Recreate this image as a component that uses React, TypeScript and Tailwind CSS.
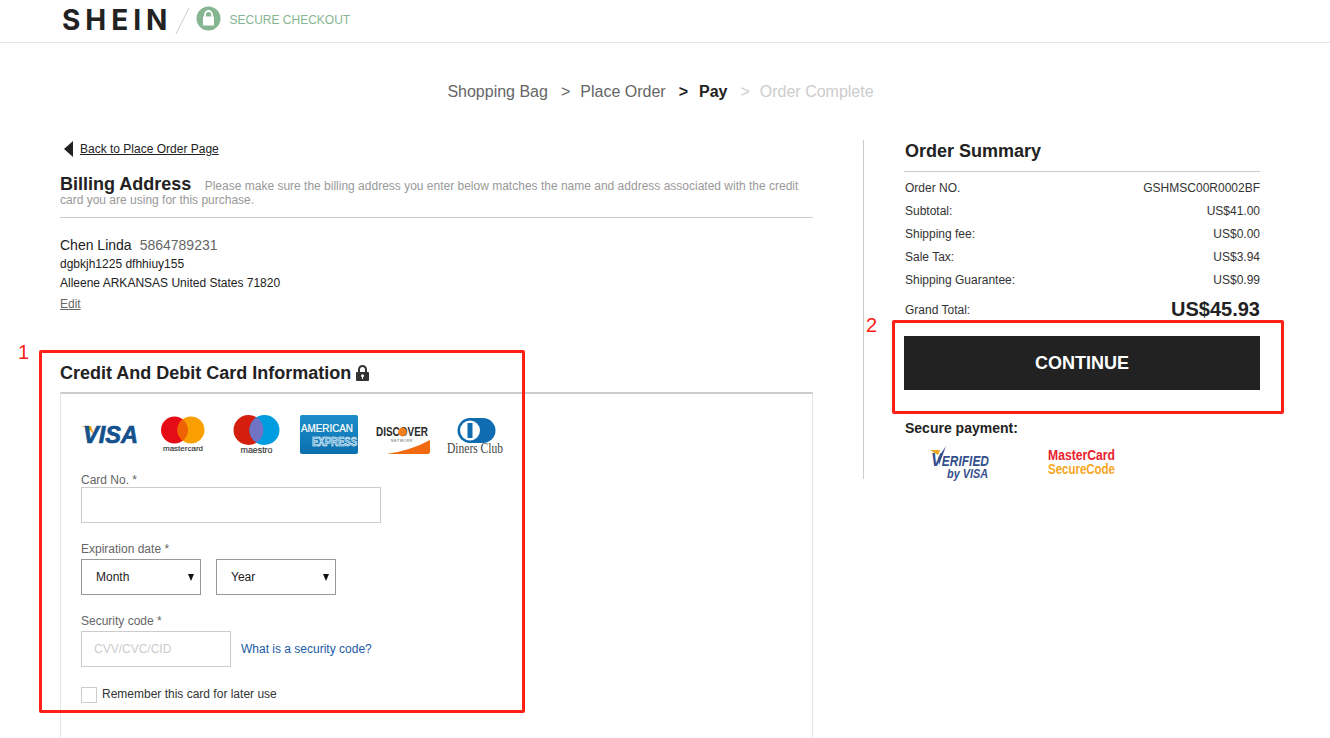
import React from "react";

const Visa = () => (
  <svg className="overflow-visible" width="60" height="40" viewBox="0 0 60 40">
    <path d="M0 11 L10 11 L13 20 Q9 13.5 0 11Z" fill="#f0a51e" />
    <text x="2" y="28" fontFamily="'Liberation Sans',sans-serif" fontWeight="700" fontStyle="italic" fontSize="24" fill="#14508c" stroke="#14508c" strokeWidth="0.7" textLength="55" lengthAdjust="spacingAndGlyphs">VISA</text>
  </svg>
);
const Mastercard = () => (
  <svg className="overflow-visible" width="44" height="40" viewBox="0 0 44 40">
    <circle cx="13.5" cy="15" r="13.5" fill="#e60c17" />
    <circle cx="30" cy="15" r="13.5" fill="#f9a000" />
    <path d="M21.75 4.3a13.5 13.5 0 0 1 0 21.4a13.5 13.5 0 0 1 0-21.4z" fill="#ee6203" />
    <text x="22" y="36" textAnchor="middle" fontFamily="'Liberation Sans',sans-serif" fontSize="8" fill="#333" stroke="#333" strokeWidth="0.15" textLength="40" lengthAdjust="spacingAndGlyphs">mastercard</text>
  </svg>
);
const Maestro = () => (
  <svg className="overflow-visible" width="48" height="40" viewBox="0 0 48 40">
    <circle cx="15.5" cy="15" r="15" fill="#d41f0e" />
    <circle cx="31.5" cy="15" r="15" fill="#009ce0" />
    <path d="M23.5 2.3a15 15 0 0 1 0 25.4a15 15 0 0 1 0-25.4z" fill="#7174c4" />
    <text x="23.5" y="38" textAnchor="middle" fontFamily="'Liberation Sans',sans-serif" fontSize="8.5" fill="#333" stroke="#333" strokeWidth="0.15" textLength="32" lengthAdjust="spacingAndGlyphs">maestro</text>
  </svg>
);
const Amex = () => (
  <svg className="overflow-visible" width="58" height="40" viewBox="0 0 58 40">
    <defs>
      <linearGradient id="ax" x1="0" y1="0" x2="0" y2="1">
        <stop offset="0" stopColor="#1d8fcb" />
        <stop offset="1" stopColor="#0b6fae" />
      </linearGradient>
    </defs>
    <rect width="58" height="39" rx="2" fill="url(#ax)" />
    <text x="1" y="17" fontFamily="'Liberation Sans',sans-serif" fontSize="10.5" fill="#fff" stroke="#fff" strokeWidth="0.2" textLength="52" lengthAdjust="spacingAndGlyphs">AMERICAN</text>
    <text x="12" y="31" fontFamily="'Liberation Sans',sans-serif" fontWeight="700" fontSize="12" fill="#4a9fd0" stroke="#fff" strokeWidth="0.6" textLength="45" lengthAdjust="spacingAndGlyphs">EXPRESS</text>
  </svg>
);
const Discover = () => (
  <svg className="overflow-visible" width="56" height="40" viewBox="0 0 56 40">
    <text x="0" y="21" fontFamily="'Liberation Sans',sans-serif" fontWeight="700" fontSize="12" fill="#2a2a2a" textLength="52" lengthAdjust="spacingAndGlyphs">DISCOVER</text>
    <circle cx="26.5" cy="17" r="4.4" fill="#f08020" />
    <text x="26" y="27" textAnchor="middle" fontFamily="'Liberation Sans',sans-serif" fontSize="3.6" fill="#555" letterSpacing="0.5">NETWORK</text>
    <path d="M11 39 Q36 35 54 25 L54 37 Q54 39 52 39Z" fill="#f26a0f" />
  </svg>
);
const Diners = () => (
  <svg className="overflow-visible" width="58" height="42" viewBox="0 0 58 42">
    <path d="M23 3 H36 A12.5 12.5 0 0 1 36 28 H23Z" fill="#0f6cb0" />
    <circle cx="23" cy="15.5" r="12.5" fill="#0f6cb0" />
    <circle cx="23" cy="15.5" r="10" fill="#fff" />
    <rect x="20.5" y="8" width="5" height="15" fill="#0f6cb0" />
    <text x="0" y="38" fontFamily="'Liberation Serif',serif" fontSize="14" fill="#444" textLength="56" lengthAdjust="spacingAndGlyphs">Diners Club</text>
  </svg>
);

const Row = ({ l, r }: { l: string; r: string }) => (
  <div className="flex h-[23px] items-center justify-between pl-[1px] text-xs text-[#333]">
    <span>{l}</span>
    <span>{r}</span>
  </div>
);

const Sel = ({ label, className }: { label: string; className?: string }) => (
  <div className={"relative w-[120px] " + (className ?? "")}>
    <select className="h-9 w-full appearance-none rounded-none border border-[#999] bg-white pl-[14px] text-xs text-[#222] outline-none">
      <option>{label}</option>
    </select>
    <svg className="absolute right-[7px] top-[15px]" width="6" height="7" viewBox="0 0 6 7">
      <path d="M0 0H6L3 7Z" fill="#111" />
    </svg>
  </div>
);

export default function App() {
  return (
    <div className="relative h-[738px] overflow-hidden bg-white font-['Liberation_Sans',Arial,sans-serif] text-[#222]">
      <header className="flex h-[43px] items-center border-b border-[#e5e5e5] pb-[3px] pl-[62px]">
        <span className="font-['Inter',sans-serif] text-[28px] font-bold leading-none tracking-[5px] text-[#222]">SHEIN</span>
        <svg className="ml-[3px] mt-[2px]" width="16" height="28" viewBox="0 0 16 28">
          <path d="M14 1 L1 27" stroke="#ccc" strokeWidth="1" />
        </svg>
        <svg className="ml-[5px] mt-[-2px]" width="25" height="25" viewBox="0 0 25 25">
          <circle cx="12.5" cy="12.5" r="12" fill="#86b592" />
          <rect x="7" y="10.5" width="11" height="9" fill="#fff" />
          <path d="M9 11V8.5a3.5 3.5 0 0 1 7 0V11" fill="none" stroke="#fff" strokeWidth="1.8" />
        </svg>
        <span className="ml-[8px] text-xs text-[#86b592]">SECURE CHECKOUT</span>
      </header>

      <nav className="flex h-[97px] items-start justify-center pr-[9px] pt-[39px] text-base leading-[20px] text-[#666]">
        <span>Shopping Bag</span>
        <span className="ml-[13px]">&gt;</span>
        <span className="ml-[10px]">Place Order</span>
        <span className="ml-[13px] font-bold text-[#222]">&gt;</span>
        <span className="ml-[11px] font-bold text-[#222]">Pay</span>
        <span className="ml-[13px] text-[#ccc]">&gt;</span>
        <span className="ml-[10px] text-[#ccc]">Order Complete</span>
      </nav>

      <main className="flex items-start pl-[60px]">
        <section className="w-[753px]">
          <a className="flex h-[18px] items-center pl-[4px] text-xs text-[#222] underline">
            <svg className="mr-[7px]" width="9" height="16" viewBox="0 0 9 16">
              <path d="M9 0V16L0 8Z" fill="#222" />
            </svg>
            Back to Place Order Page
          </a>
          <div className="mt-[19px] border-b border-[#ccc] pb-[10px] text-xs leading-[14px] text-[#999]">
            <span className="mr-[10px] text-lg font-bold leading-[14px] text-[#222]">Billing Address</span>{" "}
            Please make sure the billing address you enter below matches the name and address associated with the credit card you are using for this purchase.
          </div>
          <div className="mt-[18px] text-sm leading-[18px] text-[#222]">
            Chen Linda<span className="ml-[8px] text-[#666]">5864789231</span>
          </div>
          <div className="mt-[1px] text-xs leading-[19px] text-[#222]">dgbkjh1225 dfhhiuy155</div>
          <div className="text-xs leading-[19px] text-[#222]">Alleene ARKANSAS United States 71820</div>
          <a className="mt-[2px] block text-xs leading-[19px] text-[#666] underline">Edit</a>

          <h2 className="mt-[48px] flex h-[22px] items-center text-lg font-bold text-[#222]">
            Credit And Debit Card Information
            <svg className="ml-[4px]" width="15" height="16" viewBox="0 0 15 16">
              <path d="M4 7V4.5a3.5 3.5 0 0 1 7 0V7" fill="none" stroke="#333" strokeWidth="2" />
              <rect x="1" y="7" width="13" height="9" rx="1" fill="#333" />
              <circle cx="7.5" cy="10.8" r="1.5" fill="#fff" />
              <rect x="7" y="11" width="1" height="3" fill="#fff" />
            </svg>
          </h2>
          <div className="mt-[8px] h-[400px] border border-t-2 border-[#e5e5e5] border-t-[#ccc] pl-[20px] pt-[21px]">
            <div className="flex h-[40px] items-start">
              <Visa />
              <div className="ml-[20px]"><Mastercard /></div>
              <div className="ml-[28px]"><Maestro /></div>
              <div className="ml-[19px]"><Amex /></div>
              <div className="ml-[18px]"><Discover /></div>
              <div className="ml-[15px]"><Diners /></div>
            </div>
            <label className="mt-[18px] block text-xs leading-[14px] text-[#666]">Card No. *</label>
            <input className="block h-9 w-[300px] border border-[#ccc] outline-none" />
            <label className="mt-[19px] block text-xs leading-[14px] text-[#666]">Expiration date *</label>
            <div className="mt-[3px] flex">
              <Sel label="Month" />
              <Sel label="Year" className="ml-[15px]" />
            </div>
            <label className="mt-[19px] block text-xs leading-[14px] text-[#666]">Security code *</label>
            <div className="mt-[3px] flex items-center">
              <input
                className="h-9 w-[150px] border border-[#ccc] pl-[12px] text-xs outline-none placeholder:text-[#ccc]"
                placeholder="CVV/CVC/CID"
              />
              <a className="ml-[10px] text-xs text-[#1b5aa5]">What is a security code?</a>
            </div>
            <div className="mt-[20px] flex items-center">
              <span className="block h-4 w-4 border border-[#ccc] bg-white" />
              <span className="ml-[5px] mt-[-2px] text-xs text-[#333]">Remember this card for later use</span>
            </div>
          </div>
        </section>

        <aside className="ml-[50px] h-[339px] w-[397px] border-l border-[#ccc] pl-[40px]">
          <h2 className="border-b border-[#ccc] pb-[9px] pl-[1px] text-lg font-bold leading-[22px] text-[#222]">Order Summary</h2>
          <div className="pt-[4px]">
            <Row l="Order NO." r="GSHMSC00R0002BF" />
            <Row l="Subtotal:" r="US$41.00" />
            <Row l="Shipping fee:" r="US$0.00" />
            <Row l="Sale Tax:" r="US$3.94" />
            <Row l="Shipping Guarantee:" r="US$0.99" />
          </div>
          <div className="mt-[7px] flex h-[23px] items-center justify-between pl-[1px] text-xs text-[#333]">
            <span>Grand Total:</span>
            <span className="text-xl font-bold leading-[23px] text-[#222]">US$45.93</span>
          </div>
          <button className="mt-[15px] block h-[54px] w-full bg-[#222] text-lg font-bold text-white">CONTINUE</button>
          <div className="ml-[1px] mt-[30px] text-sm font-bold leading-[16px] text-[#222]">Secure payment:</div>
          <div className="mt-[8px] flex">
            <svg className="ml-[25px] overflow-visible" width="64" height="38" viewBox="0 0 64 38">
              <path d="M1 6 L11 6 L9 11Z" fill="#f0a51e" />
              <path d="M17 2 L9 14 L10 21Z" fill="#35508c" />
              <text x="2" y="22" fontFamily="'Liberation Sans',sans-serif" fontWeight="700" fontStyle="italic" fontSize="14" fill="#35508c" textLength="58" lengthAdjust="spacingAndGlyphs"><tspan fontSize="19">V</tspan>ERIFIED</text>
              <text x="18" y="34" fontFamily="'Liberation Sans',sans-serif" fontWeight="700" fontStyle="italic" fontSize="12" fill="#35508c" textLength="41" lengthAdjust="spacingAndGlyphs">by VISA</text>
            </svg>
            <svg className="ml-[54px] overflow-visible" width="72" height="38" viewBox="0 0 72 38">
              <text x="1" y="16" fontFamily="'Liberation Sans',sans-serif" fontWeight="700" fontSize="14" fill="#e8212e" textLength="67" lengthAdjust="spacingAndGlyphs">MasterCard</text>
              <text x="1" y="30" fontFamily="'Liberation Sans',sans-serif" fontWeight="700" fontSize="14" fill="#f6a623" textLength="67" lengthAdjust="spacingAndGlyphs">SecureCode</text>
            </svg>
          </div>
        </aside>
      </main>

      <div className="absolute left-[39px] top-[350px] h-[363px] w-[486px] rounded-[2px] border-[3px] border-[#ff2116]" />
      <div className="absolute left-[892px] top-[320px] h-[94px] w-[392px] rounded-[2px] border-[3px] border-[#ff2116]" />
      <span className="absolute left-[18px] top-[340px] text-xl leading-[24px] text-[#ff2116]">1</span>
      <span className="absolute left-[866px] top-[313px] text-xl leading-[24px] text-[#ff2116]">2</span>
    </div>
  );
}
